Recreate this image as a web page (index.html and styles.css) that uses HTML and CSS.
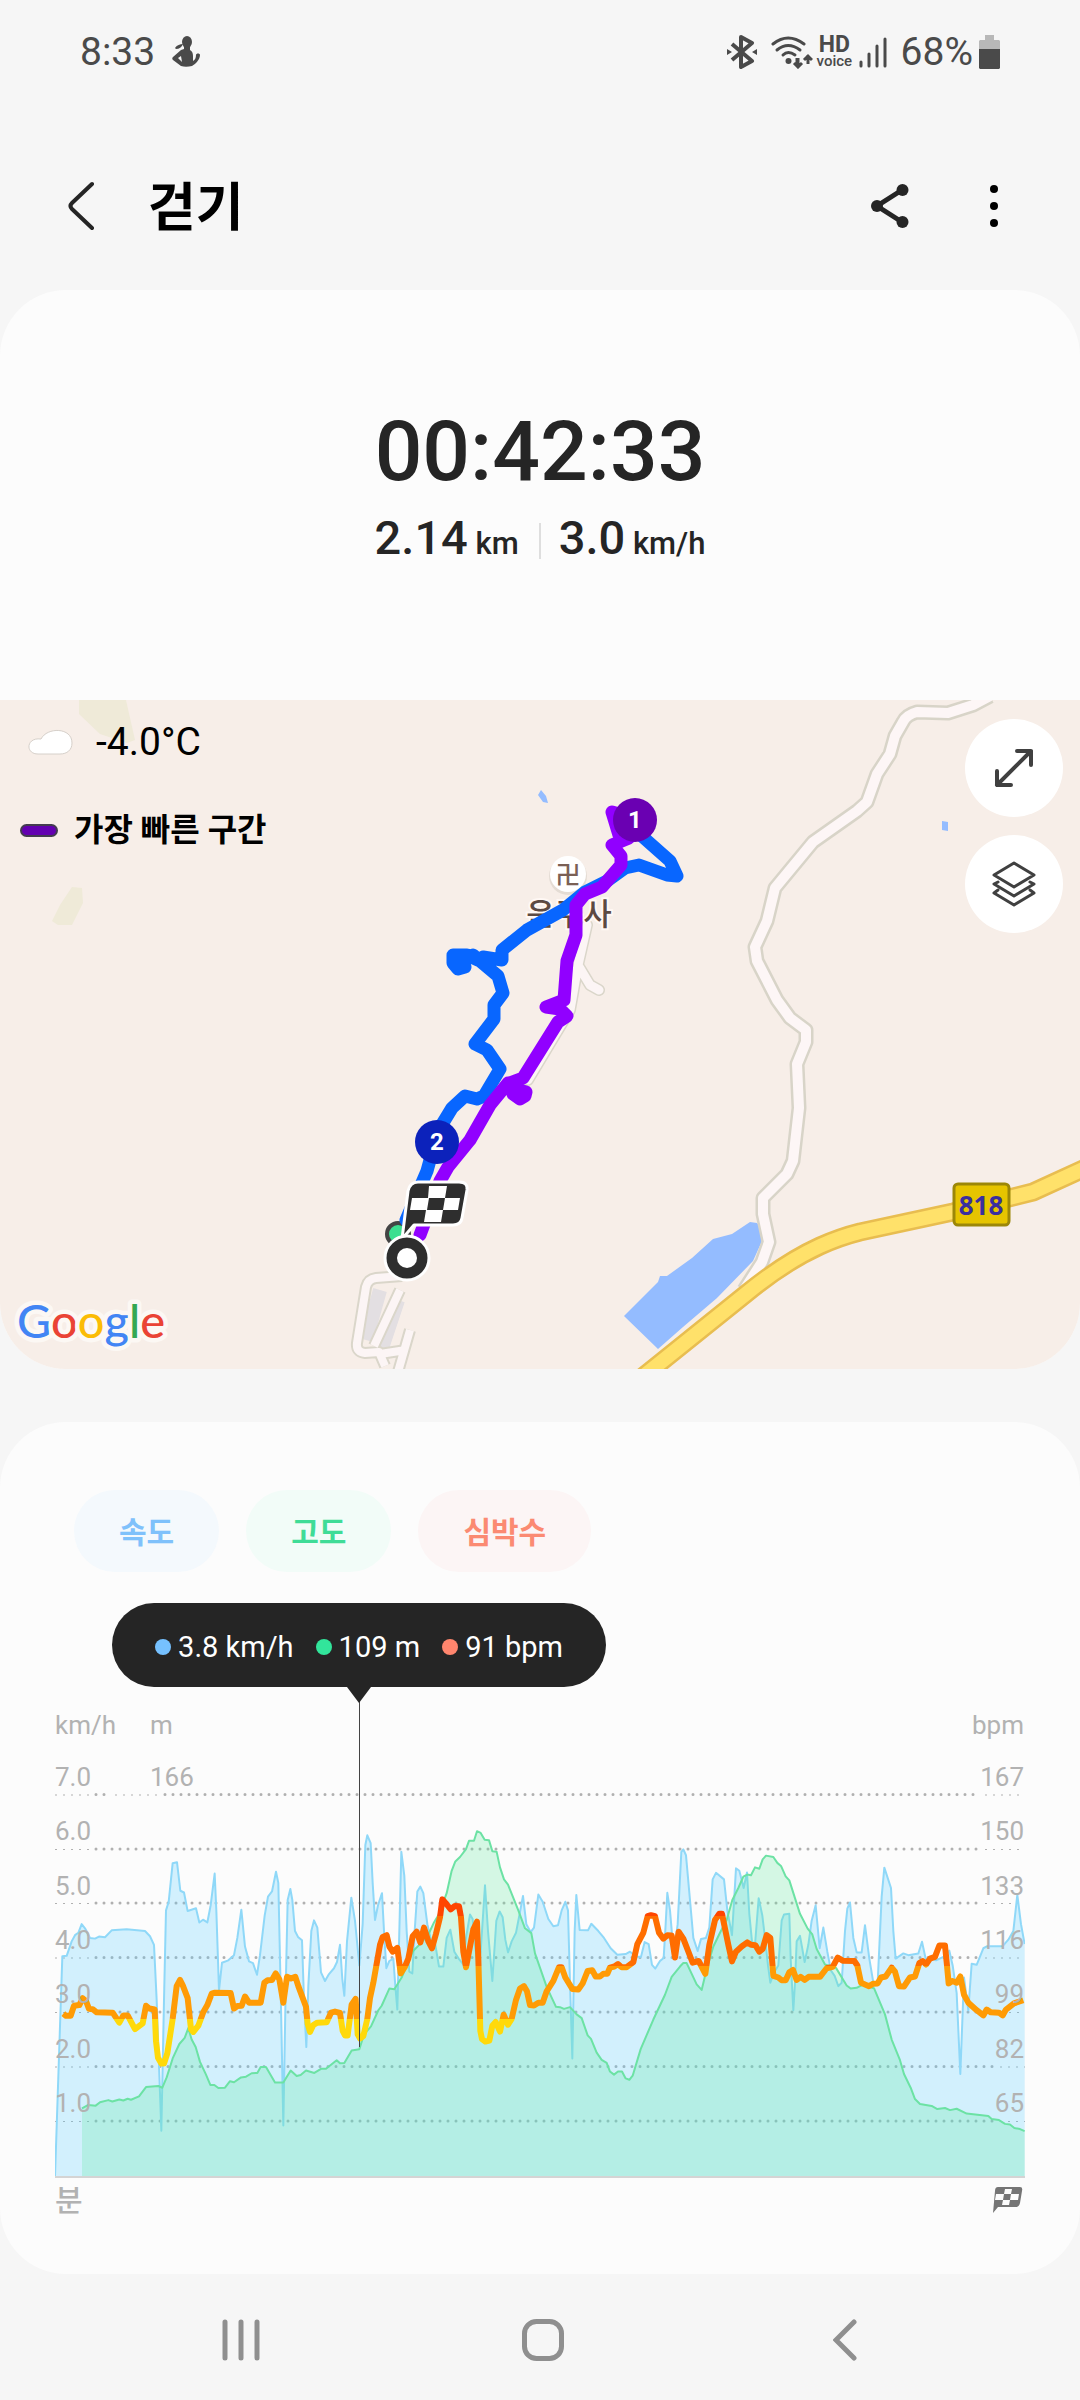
FILE: index.html
```html
<!DOCTYPE html>
<html lang="ko">
<head>
<meta charset="utf-8">
<meta name="viewport" content="width=device-width, initial-scale=1">
<title>걷기</title>
<link rel="stylesheet" href="styles.css">
</head>
<body>
<div class="status">
  <span class="status-time">8:33</span>
  <svg class="status-person" width="28" height="32" viewBox="0 0 28 32" aria-hidden="true">
    <ellipse cx="15" cy="6" rx="5" ry="6"/>
    <path d="M12 9h6v5c2 1 3 3 3 6v5c2-1 3-3 3-6 0-2 4-2 4 0 0 4-4 9-8 11-4 1-8 1-11 0L1 24c-1-1-1-2 0-3l8-7 3-1zM6 22l4 4-1-6z" fill-rule="evenodd"/>
    <path d="M3 12c2-3 5-4 8-4-1 3-4 5-7 5z"/>
  </svg>
  <div class="status-right">
    <svg width="30" height="34" viewBox="0 0 30 34" aria-hidden="true">
      <path d="M5 9l20 17-11 6V2l11 6L5 25" fill="none" stroke="#4a4a4a" stroke-width="4" stroke-linejoin="round"/>
      <path d="M0 14l5 3-5 3zM30 14l-5 3 5 3z"/>
    </svg>
    <svg class="wifi" width="42" height="34" viewBox="0 0 42 34" aria-hidden="true">
      <g fill="none" stroke="#4a4a4a" stroke-width="3" stroke-linecap="round"><path d="M2 9q15-12 31 0"/><path d="M6 15q11-9 23 0"/><path d="M12 20q5-5 12 0"/></g>
      <circle cx="17.500" cy="26" r="3"/>
      <path d="M26 23v7m-3-2l4 4 4-4m-4 4v-9M37 29V20m-4 5l4-4 4 4" fill="none" stroke="#4a4a4a" stroke-width="3"/>
    </svg>
    <span class="hd"><b>HD</b><span>voice</span></span>
    <svg class="signal" width="28" height="32" viewBox="0 0 28 32" aria-hidden="true">
      <path d="M2 26v4M10 18v12M18 10v20M26 3v27" stroke="#4a4a4a" stroke-width="3" stroke-linecap="round"/>
    </svg>
    <span class="percent">68%</span>
    <svg width="21" height="34" viewBox="0 0 21 34" aria-hidden="true">
      <path d="M6 0h9v5h5l1 1v8H0V6l1-1h5z" fill="#b8b8b8"/><path d="M0 14h21v19l-1 1H1l-1-1z"/>
    </svg>
  </div>
</div>

<header class="bar">
  <button class="icon-btn" aria-label="뒤로"><svg width="28" height="50" viewBox="0 0 28 50"><path d="M25 3L5 22q-3 3 0 6l20 19" fill="none" stroke="#252525" stroke-width="4" stroke-linecap="round"/></svg></button>
  <h1>걷기</h1>
  <button class="icon-btn share" aria-label="공유"><svg width="38" height="46" viewBox="0 0 38 46" fill="#252525"><path d="M31 7L6 23l25 16" fill="none" stroke="#252525" stroke-width="5"/><circle cx="31.500" cy="7" r="6"/><circle cx="6" cy="23" r="6"/><circle cx="31.500" cy="39" r="6"/></svg></button>
  <button class="icon-btn more" aria-label="더보기"><svg width="10" height="46" viewBox="0 0 10 46"><circle cx="5" cy="6" r="4"/><circle cx="5" cy="23" r="4"/><circle cx="5" cy="40" r="4"/></svg></button>
</header>

<main>
<section class="card">
  <div class="summary">
    <div class="time">00:42:33</div>
    <div class="stats">
      <div class="stat"><b>2.14</b> km</div>
      <div class="stat"><b>3.0</b> km/h</div>
    </div>
  </div>
  <div class="map">
    <svg class="map-art" viewBox="0 700 1080 669" preserveAspectRatio="xMidYMid slice" role="img" aria-label="이동 경로 지도">
      <path fill="#efead8" d="M79 700h47l9 40-8 3-27-9-21-20zM52 921l8-16 12-18 10 1 1 15-11 22H58z"/>
      <g fill="#94bcff">
        <path d="M624 1316l34-34 2-6h7l25-18 21-19 19-5 18-12 7 1q6 6 5 18l-9 20-36 37-34 29-25 22z"/>
        <path d="M538 795l3-5 5 6 2 7-5-1zM942 821l6 1v9l-6-1z"/>
      </g>
      <g fill="none" stroke-linejoin="round">
        <path d="M380 1290l-14 50M398 1300l-16 48" stroke="#e3dfe2" stroke-width="14"/>
        <path d="M402 1276l-26 2q-8 1-10 9l-9 56q-1 9 8 10l14-1 6 14M400 1290l-26 56M410 1330l-12 42M380 1354l26-4" stroke="#dad6ca" stroke-width="12"/>
        <path d="M402 1276l-26 2q-8 1-10 9l-9 56q-1 9 8 10l14-1 6 14M400 1290l-26 56M410 1330l-12 42M380 1354l26-4" stroke="#fcf5f5" stroke-width="8"/>
        <path d="M587 925l-9 40-8 45-42 70M578 965l12 20 9 5" stroke="#dad6ca" stroke-width="12" stroke-linecap="round"/>
        <path d="M587 925l-9 40-8 45-42 70M578 965l12 20 9 5" stroke="#fcf5f5" stroke-width="9" stroke-linecap="round"/>
        <path d="M990 696L973 705 948 713 917 712Q906 715 903 722L895 736 890 754 877 774 867 802 857 811 813 842 775 888 767 921 755 947 757 961 777 1000 790 1018 806 1030 806 1042 797 1064 799 1108 793 1161 787 1174 763 1198 763 1214 769 1242 762 1262 744 1290" stroke="#d8d4c8" stroke-width="15"/>
        <path d="M990 696L973 705 948 713 917 712Q906 715 903 722L895 736 890 754 877 774 867 802 857 811 813 842 775 888 767 921 755 947 757 961 777 1000 790 1018 806 1030 806 1042 797 1064 799 1108 793 1161 787 1174 763 1198 763 1214 769 1242 762 1262 744 1290" stroke="#fdf6f6" stroke-width="10"/>
        <path d="M640 1379L747 1293Q785 1262 820 1246 840 1237 860 1232L953 1212 1033 1192 1090 1166" stroke="#e8bd50" stroke-width="19"/>
        <path d="M640 1379L747 1293Q785 1262 820 1246 840 1237 860 1232L953 1212 1033 1192 1090 1166" stroke="#ffe16a" stroke-width="14"/>
      </g>
      <rect x="954" y="1184" width="55" height="41" rx="4" fill="#e6c400" stroke="#9c8708" stroke-width="3"/>
      <text class="badge" x="981" y="1215" text-anchor="middle">818</text>
      <circle cx="568" cy="876" r="19" fill="#e4dcd4"/><circle cx="568" cy="874" r="18" fill="#fff"/>
      <text class="temple-mark" x="568" y="884" text-anchor="middle">卍</text>
      <text class="temple" x="569" y="925" text-anchor="middle">운주사</text>
      <circle cx="398" cy="1234" r="11" fill="#3cdf90" stroke="#444" stroke-width="4"/>
      <g fill="none" stroke-width="13" stroke-linejoin="round" stroke-linecap="round">
        <path stroke="#0866ff" d="M635 830L670 861 677 876 667 875 639 865 625 868 607 881 585 892 563 910 527 930 502 950 502 960 483 957 478 960 467 955H453L453 963 458 969 465 967 462 961 473 955 498 976 503 993 494 1005V1019L475 1044 487 1050 500 1069 484 1096 477 1099 465 1096 452 1108 438 1131 427 1171 406 1220"/>
        <path stroke="#9100ff" d="M640 820L612 812 619 835 629 838 612 845 621 856V865L602 887 585 894 576 905V935L567 961 564 1000 546 1007 560 1009 567 1016 558 1022 523 1078 510 1083 513 1094 520 1099 525 1096 526 1092 512 1088 508 1083 490 1105 470 1140 448 1167 440 1181 420 1235"/>
      </g>
      <circle cx="635" cy="820" r="22" fill="#6a00b2"/><circle cx="437" cy="1142" r="22" fill="#0c22bb"/>
      <text class="pin" x="635" y="828" text-anchor="middle">1</text>
      <text class="pin" x="437" y="1150" text-anchor="middle">2</text>
      <path d="M418 1182h41q9 0 8 8l-5 28q-1 7-9 7h-39l-12 14 6-48q2-9 10-9z" fill="#2e2e2e" stroke="#fff" stroke-width="3" stroke-linejoin="round"/>
      <path d="M431 1186h16l-2 12h15l-2 12h-15l-2 12h-17l2-12h-16l2-12h16l1-12zm-2 12l-2 12h16l2-12z" fill="#fff" fill-rule="evenodd"/>
      <circle cx="407" cy="1258" r="22" fill="#2e2e2e" stroke="#fff" stroke-width="3"/><circle cx="407" cy="1258" r="10" fill="#fff"/>
      <text class="google" x="17" y="1338"><tspan fill="#4285f4">G</tspan><tspan fill="#ea4335">o</tspan><tspan fill="#fbbc05">o</tspan><tspan fill="#4285f4">g</tspan><tspan fill="#34a853">l</tspan><tspan fill="#ea4335">e</tspan></text>
    </svg>
    <div class="map-info">
      <div class="weather"><svg width="46" height="26" viewBox="0 0 46 26" aria-hidden="true"><path d="M11 25C-2 25-1 8 14 10 20-2 45-2 45 14c0 7-5 11-12 11z" fill="#fff" stroke="#d6d0ca"/></svg><span>-4.0°C</span></div>
      <div class="legend"><i></i><span>가장 빠른 구간</span></div>
    </div>
    <div class="map-tools">
      <button class="round" aria-label="확대"><svg width="42" height="42" viewBox="0 0 42 42" fill="none" stroke="#404040" stroke-width="4" stroke-linecap="round" stroke-linejoin="round"><path d="M4 38L38 4M24 4h14v14M4 24v14h14"/></svg></button>
      <button class="round" aria-label="지도 유형"><svg width="44" height="46" viewBox="0 0 44 46" fill="none" stroke="#404040" stroke-width="3" stroke-linejoin="round" stroke-linecap="round"><path d="M22 2l20 12-20 12L2 14zM6 21l-4 2 20 12 20-12-4-2M6 29l-4 3 20 12 20-12-4-3"/></svg></button>
    </div>
  </div>
</section>

<section class="card chart-card">
  <div class="chips">
    <button class="chip speed">속도</button>
    <button class="chip alt">고도</button>
    <button class="chip heart">심박수</button>
  </div>
  <div class="tip"><span class="speed">3.8 km/h</span><span class="alt">109 m</span><span class="heart">91 bpm</span></div>
  <svg class="chart" viewBox="0 0 970 530" role="img" aria-label="속도, 고도, 심박수 그래프">
    <defs>
      <linearGradient id="zones" gradientUnits="userSpaceOnUse" x1="0" y1="655" x2="0" y2="955">
        <stop offset="0" stop-color="#ff4500"/><stop offset="0" stop-color="#ff6d00"/>
        <stop offset=".493" stop-color="#ff6d00"/><stop offset=".493" stop-color="#ff9b05"/>
        <stop offset="1" stop-color="#ff9b05"/><stop offset="1" stop-color="#ffd90a"/>
      </linearGradient>
    </defs>
    <g class="dots">
      <path d="M41 104.500H55M110 104.500H926M41 159H926M41 213H926M41 267.500H926M41 322H926M41 376.500H942M41 431H942"/>
      <path class="thin" d="M0 105H35M60 105H105M930 105H970M0 159.500H35M930 159.500H970M0 213.500H35M930 213.500H970M0 268H35M930 268H970M0 322.500H35M930 322.500H970M0 377H35M945 377H970M0 431.500H35M945 431.500H970"/>
    </g>
    <g transform="scale(.33333 .34435)">
      <path class="area-speed" d="M0 1413L22 773 35 772 50 730 60 712 70 705 80 680 90 692 105 720 120 722 132 716 150 718 170 698 215 695 270 700 285 715 297 740 305 900 319 1280 327 900 333 640 341 615 353 503 366 500 376 583 387 588 398 642 423 634 433 675 444 667 457 675 467 625 479 533 484 640 492 872 501 792 520 785 537 770 547 720 559 638 570 745 582 788 594 793 606 827 615 770 629 655 639 600 651 585 663 528 670 560 677 870 685 1265 692 870 698 610 706 578 712 610 720 700 729 717 741 727 747 900 754 1037 760 860 769 700 777 669 787 690 798 820 810 845 822 825 837 808 846 790 855 740 862 840 868 888 876 730 889 603 900 670 913 800 923 680 931 450 937 422 947 445 953 560 960 668 969 625 981 590 987 700 994 808 1003 787 1015 780 1021 860 1027 928 1033 700 1039 470 1048 540 1055 700 1063 818 1072 823 1079 700 1087 585 1096 571 1105 590 1117 680 1129 730 1141 740 1152 803 1165 803 1175 720 1186 696 1198 760 1211 780 1223 795 1233 720 1245 652 1253 665 1260 740 1269 815 1277 760 1290 567 1299 700 1312 845 1324 670 1334 643 1343 660 1351 725 1359 762 1370 730 1383 705 1392 660 1404 598 1414 680 1427 703 1437 690 1450 594 1463 615 1480 665 1495 686 1509 683 1520 640 1531 615 1539 640 1545 850 1552 1070 1559 700 1564 595 1574 697 1599 698 1609 679 1630 700 1647 720 1667 750 1687 769 1712 767 1725 760 1745 775 1758 775 1769 732 1781 738 1791 798 1801 809 1815 787 1826 778 1832 680 1837 589 1845 640 1852 720 1860 740 1868 680 1879 470 1885 463 1893 480 1905 610 1915 720 1928 758 1938 723 1953 720 1963 690 1973 550 1983 531 2007 550 2017 640 2031 712 2038 600 2043 518 2053 525 2066 575 2076 530 2083 650 2091 730 2100 740 2111 605 2122 655 2130 720 2139 800 2146 850 2157 820 2170 800 2180 670 2187 652 2203 650 2207 780 2215 930 2220 850 2225 730 2235 714 2249 790 2260 740 2270 670 2282 625 2294 750 2305 690 2317 760 2328 815 2339 830 2350 860 2360 850 2370 700 2377 635 2385 617 2395 720 2405 762 2420 762 2430 683 2443 780 2455 850 2468 850 2480 600 2488 516 2508 575 2515 700 2522 780 2545 765 2560 770 2590 765 2601 731 2613 785 2625 775 2643 785 2665 775 2683 757 2693 800 2705 880 2716 1115 2727 835 2740 930 2750 795 2765 798 2785 750 2797 744 2843 744 2860 725 2875 700 2887 595 2898 680 2909 738V1413z"/>
      <path class="line-speed" d="M0 1413L22 773 35 772 50 730 60 712 70 705 80 680 90 692 105 720 120 722 132 716 150 718 170 698 215 695 270 700 285 715 297 740 305 900 319 1280 327 900 333 640 341 615 353 503 366 500 376 583 387 588 398 642 423 634 433 675 444 667 457 675 467 625 479 533 484 640 492 872 501 792 520 785 537 770 547 720 559 638 570 745 582 788 594 793 606 827 615 770 629 655 639 600 651 585 663 528 670 560 677 870 685 1265 692 870 698 610 706 578 712 610 720 700 729 717 741 727 747 900 754 1037 760 860 769 700 777 669 787 690 798 820 810 845 822 825 837 808 846 790 855 740 862 840 868 888 876 730 889 603 900 670 913 800 923 680 931 450 937 422 947 445 953 560 960 668 969 625 981 590 987 700 994 808 1003 787 1015 780 1021 860 1027 928 1033 700 1039 470 1048 540 1055 700 1063 818 1072 823 1079 700 1087 585 1096 571 1105 590 1117 680 1129 730 1141 740 1152 803 1165 803 1175 720 1186 696 1198 760 1211 780 1223 795 1233 720 1245 652 1253 665 1260 740 1269 815 1277 760 1290 567 1299 700 1312 845 1324 670 1334 643 1343 660 1351 725 1359 762 1370 730 1383 705 1392 660 1404 598 1414 680 1427 703 1437 690 1450 594 1463 615 1480 665 1495 686 1509 683 1520 640 1531 615 1539 640 1545 850 1552 1070 1559 700 1564 595 1574 697 1599 698 1609 679 1630 700 1647 720 1667 750 1687 769 1712 767 1725 760 1745 775 1758 775 1769 732 1781 738 1791 798 1801 809 1815 787 1826 778 1832 680 1837 589 1845 640 1852 720 1860 740 1868 680 1879 470 1885 463 1893 480 1905 610 1915 720 1928 758 1938 723 1953 720 1963 690 1973 550 1983 531 2007 550 2017 640 2031 712 2038 600 2043 518 2053 525 2066 575 2076 530 2083 650 2091 730 2100 740 2111 605 2122 655 2130 720 2139 800 2146 850 2157 820 2170 800 2180 670 2187 652 2203 650 2207 780 2215 930 2220 850 2225 730 2235 714 2249 790 2260 740 2270 670 2282 625 2294 750 2305 690 2317 760 2328 815 2339 830 2350 860 2360 850 2370 700 2377 635 2385 617 2395 720 2405 762 2420 762 2430 683 2443 780 2455 850 2468 850 2480 600 2488 516 2508 575 2515 700 2522 780 2545 765 2560 770 2590 765 2601 731 2613 785 2625 775 2643 785 2665 775 2683 757 2693 800 2705 880 2716 1115 2727 835 2740 930 2750 795 2765 798 2785 750 2797 744 2843 744 2860 725 2875 700 2887 595 2898 680 2909 738"/>
      <path class="area-alt" d="M81 1413V1215L100 1205 122 1207 135 1197 160 1191 172 1195 193 1189 205 1192 218 1187 228 1190 252 1180 273 1153 310 1150 322 1155 335 1125 353 1070 373 1028 389 1010 400 982 410 1015 422 1037 435 1080 453 1117 466 1147 478 1147 490 1156 510 1155 525 1136 537 1139 558 1125 573 1123 590 1113 607 1112 617 1095 633 1095 660 1140 685 1140 707 1105 725 1121 737 1118 753 1105 778 1112 798 1100 813 1100 845 1075 855 1084 868 1083 890 1047 913 1043 927 1000 948 977 970 930 980 917 1003 867 1018 869 1040 835 1055 800 1075 757 1095 738 1120 710 1137 675 1150 654 1160 630 1175 590 1190 525 1201 498 1215 485 1233 462 1242 438 1257 438 1266 410 1277 415 1289 435 1302 436 1312 468 1325 470 1335 515 1347 550 1359 565 1390 640 1410 692 1429 706 1440 765 1475 862 1503 920 1515 921 1527 926 1545 921 1565 942 1580 953 1598 1003 1608 1013 1625 1053 1640 1074 1655 1083 1665 1108 1677 1117 1689 1108 1701 1108 1712 1128 1723 1132 1733 1120 1757 1043 1795 957 1830 885 1850 833 1875 803 1885 793 1895 793 1925 855 1940 871 1955 810 1975 745 1995 705 2015 668 2032 610 2050 575 2065 542 2077 536 2088 538 2100 515 2113 519 2123 492 2133 481 2155 485 2167 502 2178 511 2192 541 2203 553 2235 650 2258 693 2272 710 2285 752 2310 797 2343 807 2375 858 2387 867 2405 865 2425 855 2442 862 2457 866 2490 942 2510 1015 2535 1075 2547 1115 2567 1155 2580 1188 2595 1202 2630 1208 2647 1217 2670 1214 2685 1220 2705 1216 2735 1230 2800 1237 2810 1246 2832 1249 2850 1260 2865 1262 2878 1272 2895 1275 2909 1281V1413z"/>
      <path class="line-alt" d="M81 1215L100 1205 122 1207 135 1197 160 1191 172 1195 193 1189 205 1192 218 1187 228 1190 252 1180 273 1153 310 1150 322 1155 335 1125 353 1070 373 1028 389 1010 400 982 410 1015 422 1037 435 1080 453 1117 466 1147 478 1147 490 1156 510 1155 525 1136 537 1139 558 1125 573 1123 590 1113 607 1112 617 1095 633 1095 660 1140 685 1140 707 1105 725 1121 737 1118 753 1105 778 1112 798 1100 813 1100 845 1075 855 1084 868 1083 890 1047 913 1043 927 1000 948 977 970 930 980 917 1003 867 1018 869 1040 835 1055 800 1075 757 1095 738 1120 710 1137 675 1150 654 1160 630 1175 590 1190 525 1201 498 1215 485 1233 462 1242 438 1257 438 1266 410 1277 415 1289 435 1302 436 1312 468 1325 470 1335 515 1347 550 1359 565 1390 640 1410 692 1429 706 1440 765 1475 862 1503 920 1515 921 1527 926 1545 921 1565 942 1580 953 1598 1003 1608 1013 1625 1053 1640 1074 1655 1083 1665 1108 1677 1117 1689 1108 1701 1108 1712 1128 1723 1132 1733 1120 1757 1043 1795 957 1830 885 1850 833 1875 803 1885 793 1895 793 1925 855 1940 871 1955 810 1975 745 1995 705 2015 668 2032 610 2050 575 2065 542 2077 536 2088 538 2100 515 2113 519 2123 492 2133 481 2155 485 2167 502 2178 511 2192 541 2203 553 2235 650 2258 693 2272 710 2285 752 2310 797 2343 807 2375 858 2387 867 2405 865 2425 855 2442 862 2457 866 2490 942 2510 1015 2535 1075 2547 1115 2567 1155 2580 1188 2595 1202 2630 1208 2647 1217 2670 1214 2685 1220 2705 1216 2735 1230 2800 1237 2810 1246 2832 1249 2850 1260 2865 1262 2878 1272 2895 1275 2909 1281"/>
      <path class="line-heart" stroke="url(#zones)" d="M25 940L33 946H47L57 917 73 915 83 895 93 903 102 926 113 927 125 936 173 937 193 966 205 945H218L240 985 263 968 273 917 283 925 299 928 303 1020 309 1068 319 1085H327L337 1055 353 955 365 860 375 842 383 857 398 895 408 985 415 993 430 975 445 935 457 915 470 882 480 879 527 880 537 925 547 918 560 917 570 890 582 908H617L628 850 638 843 651 842 662 823 673 840 685 908 696 833 708 838 721 833 730 860 753 920 758 970 765 993 775 973 787 966 815 965 828 937 840 934 855 938 863 990 870 1003H878L890 913 902 897 908 1000 915 1012 925 1005 937 955 945 895 955 850 975 740 983 717 995 712 1003 745 1013 760 1027 749 1037 823 1049 805 1060 780 1073 715 1085 702 1096 733 1107 690 1120 730 1131 750 1143 708 1155 660 1162 608 1173 620 1187 637 1200 627 1212 628 1218 660 1225 760 1233 805 1242 760 1255 695 1266 673 1270 780 1276 990 1281 1014 1291 1021 1303 1018 1312 975 1322 964 1335 992 1346 943 1359 972 1370 955 1383 900 1395 867 1407 860 1416 875 1425 915 1437 916 1450 908H1463L1475 875 1495 845 1512 805H1520L1531 835 1552 868 1570 870 1583 852 1598 816 1612 814 1622 832H1635L1645 824H1657L1665 806 1678 803 1689 796 1700 805H1715L1735 790 1747 738 1765 705 1778 657 1788 654 1800 657 1812 705 1825 722 1837 712 1850 713 1860 777 1871 702 1885 722 1913 792 1931 787 1951 824 1963 740 1980 668 1993 650H2001L2020 740 2031 788 2043 760 2060 745 2077 733 2088 740 2101 741 2113 760 2123 752 2135 712 2146 720 2155 830 2170 835 2180 843H2192L2203 820 2214 813 2225 842 2237 833 2249 842 2261 833H2295L2315 808 2333 804 2348 777 2363 786 2398 787 2407 800 2418 850 2442 860 2455 853 2468 852 2478 835 2492 832 2510 806 2520 818 2532 860 2547 861 2565 835 2580 832 2593 793 2603 787 2613 797 2625 780 2640 775 2653 742H2670L2675 790 2681 852 2692 845 2705 850 2716 832 2727 885 2740 908 2765 930 2785 945 2795 928 2807 936 2832 937 2843 945 2853 928 2877 910 2905 901"/>
    </g>
    <path d="M0 487H970" stroke="#d4d4d4" stroke-width="2"/>
    <path d="M304.500 10V357" stroke="#444" stroke-width="1"/>
    <g class="axis">
      <text x="0" y="44">km/h</text><text x="95" y="44">m</text>
      <text x="0" y="96">7.0</text><text x="95" y="96">166</text>
      <text x="0" y="150">6.0</text><text x="0" y="205">5.0</text><text x="0" y="259">4.0</text><text x="0" y="313">3.0</text><text x="0" y="368">2.0</text><text x="0" y="422">1.0</text>
      <g text-anchor="end"><text x="969" y="44">bpm</text><text x="969" y="96">167</text><text x="969" y="150">150</text><text x="969" y="205">133</text><text x="969" y="259">116</text><text x="969" y="313">99</text><text x="969" y="368">82</text><text x="969" y="422">65</text></g>
      <text class="minute" x="0" y="521">분</text>
    </g>
    <path d="M943 497h22q3 0 2 4l-2 12q-1 4-4 4h-18l-5 6 2-22q0-4 3-4z" fill="#757575"/>
    <path d="M950 499h7l-1 5h8l-1 6h-8l-1 5h-7l1-5h-8l1-6h8l1-5zm-1 5l-1 6h7l1-6z" fill="#fcfcfc" fill-rule="evenodd"/>
  </svg>
</section>
</main>

<nav class="nav">
  <button class="icon-btn" aria-label="최근 앱"><svg width="40" height="42" viewBox="0 0 40 42"><path d="M4 3v36M20 3v36M36 3v36" stroke="#8f8f8f" stroke-width="5" stroke-linecap="round"/></svg></button>
  <button class="icon-btn" aria-label="홈"><svg width="42" height="42" viewBox="0 0 42 42"><rect x="2.500" y="2.500" width="37" height="37" rx="12" fill="none" stroke="#8f8f8f" stroke-width="5"/></svg></button>
  <button class="icon-btn" aria-label="뒤로"><svg width="24" height="42" viewBox="0 0 24 42"><path d="M21 3L3 21l18 18" fill="none" stroke="#8f8f8f" stroke-width="5" stroke-linecap="round"/></svg></button>
</nav>
</body>
</html>
```

FILE: styles.css
```css
* { box-sizing: border-box; }
body {
  margin: 0;
  background: #f6f6f6;
  color: #252525;
  font-family: Roboto, "Noto Sans CJK KR", sans-serif;
}
svg { display: block; }
button { font: inherit; border: 0; padding: 0; cursor: pointer; }
.icon-btn { background: none; display: grid; place-items: center; }

/* status bar */
.status {
  display: flex;
  align-items: center;
  height: 104px;
  padding: 0 80px;
  color: #4a4a4a;
  fill: #4a4a4a;
  font-size: 39px;
}
.status-person { margin-left: 17px; }
.status-right { display: flex; align-items: center; margin-left: auto; }
.wifi { margin-left: 14px; }
.hd {
  display: grid;
  justify-items: center;
  width: 34px;
  margin: 0 8px 0 4px;
  font-size: 15px;
  line-height: 14px;
}
.hd b { font-size: 23px; line-height: 18px; }
.hd span { font-weight: 500; }
.percent { margin: 0 6px 0 14px; }

/* title bar */
.bar {
  display: flex;
  align-items: center;
  height: 186px;
  padding: 18px 81px 0 67px;
}
.bar h1 {
  margin: 0 auto 0 53px;
  padding-top: 6px;
  color: #000;
  font-size: 52px;
  font-weight: 700;
  line-height: 64px;
}
.more { margin-left: 80px; }

.card {
  background: #fcfcfc;
  border-radius: 66px;
  overflow: hidden;
}

/* totals */
.summary {
  height: 410px;
  padding-top: 114px;
  text-align: center;
  font-weight: 500;
}
.time { font-size: 84px; line-height: 96px; }
.stats { display: flex; justify-content: center; margin-top: 10px; }
.stat { font-size: 31px; line-height: 56px; padding: 0 20px; }
.stat b { font-size: 47px; font-weight: 500; }
.stat + .stat { background: linear-gradient(#dedede, #dedede) 0 50% / 2px 36px no-repeat; }

/* map */
.map { position: relative; height: 669px; background: #f7eee8; }
.map-art { width: 100%; height: 100%; }
.map-info { position: absolute; top: 20px; left: 20px; color: #000; }
.weather { display: flex; align-items: center; gap: 23px; padding-left: 7px; font-size: 39px; line-height: 44px; }
.legend { display: flex; align-items: center; gap: 16px; margin-top: 41px; font-size: 32px; font-weight: 700; line-height: 50px; }
.legend i { width: 38px; height: 13px; border: 2px solid #443c50; border-radius: 7px; background: #6300b0; }
.map-tools { position: absolute; top: 19px; right: 17px; display: grid; gap: 18px; }
.round { display: grid; place-items: center; width: 98px; height: 98px; border-radius: 50%; background: #fff; }
.badge { font: bold 26px "Noto Sans", sans-serif; fill: #3a2f9e; }
.temple-mark { font: 500 25px "Noto Sans CJK KR", sans-serif; fill: #7a6055; }
.temple { font: 500 31px "Noto Sans CJK KR", sans-serif; fill: #5c4a42; stroke: #fff8f4; stroke-width: 4px; paint-order: stroke; }
.pin { font-size: 24px; font-weight: 700; fill: #fff; }
.google { font: 500 47px "Lato Medium", Lato, sans-serif; stroke: #fcf8f4; stroke-width: 9px; stroke-linejoin: round; paint-order: stroke; }

/* chart */
.chart-card { margin-top: 53px; padding: 68px 55px 54px; }
.chips { display: flex; gap: 26px; padding-left: 19px; }
.chip { height: 82px; padding: 0 45px 3px; border-radius: 41px; font-size: 30px; font-weight: 700; }
.chip + .chip { margin-left: 1px; }
.chip.speed { color: #7fc1fb; background: #f4f9fd; }
.chip.alt { color: #3fdc97; background: #f2fcf8; }
.chip.heart { color: #fb8a72; background: #fcf5f5; }
.tip {
  position: relative;
  display: flex;
  align-items: center;
  justify-content: center;
  gap: 22px;
  width: 494px;
  height: 84px;
  margin: 31px 0 3px 57px;
  padding-top: 4px;
  border-radius: 42px;
  background: #252525;
  color: #fff;
  font-size: 29px;
}
.tip::after {
  content: "";
  position: absolute;
  top: 100%;
  left: 50%;
  margin-left: -12px;
  border: 12px solid transparent;
  border-top: 16px solid #252525;
  border-bottom: 0;
}
.tip span { display: flex; align-items: center; gap: 7px; }
.tip span::before { content: ""; width: 16px; height: 16px; border-radius: 50%; background: #76c1ff; }
.tip .alt::before { background: #32e59b; }
.tip .heart::before { background: #ff866e; }
.chart { width: 100%; height: auto; }
.dots { fill: none; stroke: #b0b0b0; stroke-width: 3px; stroke-dasharray: 0 8; stroke-linecap: round; }
.dots .thin { stroke-width: 1px; stroke-dasharray: 2 6; stroke-linecap: butt; }
.area-speed { fill: rgba(84, 204, 255, .25); }
.area-alt { fill: rgba(89, 235, 156, .24); }
.line-speed, .line-alt, .line-heart { fill: none; stroke-linejoin: round; vector-effect: non-scaling-stroke; }
.line-speed { stroke: #8fd8f8; stroke-width: 2px; }
.line-alt { stroke: #6ce2a4; stroke-width: 2px; }
.line-heart { stroke-width: 6px; }
.axis { fill: #b2b2b2; font-size: 26px; }
.minute { font-size: 30px; font-weight: 500; }

/* system navigation */
.nav {
  display: grid;
  grid-template-columns: repeat(3, 1fr);
  height: 126px;
  padding: 6px 84px 0 90px;
}
```
